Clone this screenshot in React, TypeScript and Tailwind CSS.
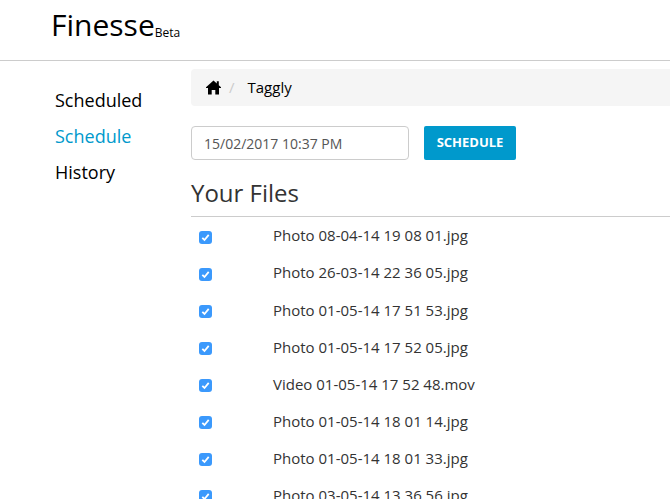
const files = [
  "Photo 08-04-14 19 08 01.jpg",
  "Photo 26-03-14 22 36 05.jpg",
  "Photo 01-05-14 17 51 53.jpg",
  "Photo 01-05-14 17 52 05.jpg",
  "Video 01-05-14 17 52 48.mov",
  "Photo 01-05-14 18 01 14.jpg",
  "Photo 01-05-14 18 01 33.jpg",
  "Photo 03-05-14 13 36 56.jpg",
];

export default function App() {
  return (
    <div className="h-[499px] w-[670px] overflow-hidden bg-white font-['Open_Sans',sans-serif] text-[#333]">
      <header className="flex h-[61px] items-start border-b border-[#ccc] pl-[51px] pt-[4px] text-black">
        <span className="text-[30px] leading-[41px]">Finesse</span>
        <span className="mt-[21px] text-[12px] leading-[16px]">Beta</span>
      </header>
      <div className="flex">
        <nav className="flex w-[191px] shrink-0 flex-col pl-[55px] pt-[21px] text-[18px] leading-[36px] text-black">
          <a>Scheduled</a>
          <a className="text-[#0099cc]">Schedule</a>
          <a>History</a>
        </nav>
        <main className="min-w-0 flex-1 pt-[8px]">
          <div className="flex h-[37px] items-center rounded-l-[4px] bg-[#f5f5f5] pl-[15px] text-[15px] text-black">
            <svg viewBox="0 0 15 15" className="h-[15px] w-[15px]" fill="currentColor">
              <path d="M7.5 0.5 L10.8 3.4 V1.2 H12.8 V5.2 L15 7.2 V8 H13 V14.5 H9.3 V10 H5.7 V14.5 H2 V8 H0 V7.2 Z" />
            </svg>
            <span className="ml-[8px] text-[#ccc]">/</span>
            <span className="ml-[13px]">Taggly</span>
          </div>
          <div className="mt-[20px] flex items-center">
            <input
              readOnly
              value="15/02/2017 10:37 PM"
              className="h-[34px] w-[218px] rounded-[4px] border border-[#ccc] px-[12px] text-[14px] text-[#555] outline-none"
            />
            <button className="ml-[15px] h-[34px] w-[92px] rounded-[2px] bg-[#0099cc] text-center text-[13px] font-bold text-white">
              SCHEDULE
            </button>
          </div>
          <h2 className="mt-[16px] text-[24px] leading-[33px] text-[#333]">Your Files</h2>
          <div className="mt-[7px] border-t border-[#ccc]">
            {files.map((f) => (
              <div key={f} className="flex h-[37.14px] items-center text-[15px]">
                <span className="ml-[8px] mt-[3px] flex h-[13px] w-[13px] items-center justify-center rounded-[3px] bg-[#3b99fc]">
                  <svg viewBox="0 0 13 13" className="h-[13px] w-[13px]" fill="none" stroke="white" strokeWidth="1.8">
                    <path d="M3.3 6.8 L5.5 9 L9.7 3.9" />
                  </svg>
                </span>
                <span className="ml-[61px]">{f}</span>
              </div>
            ))}
          </div>
        </main>
      </div>
    </div>
  );
}
